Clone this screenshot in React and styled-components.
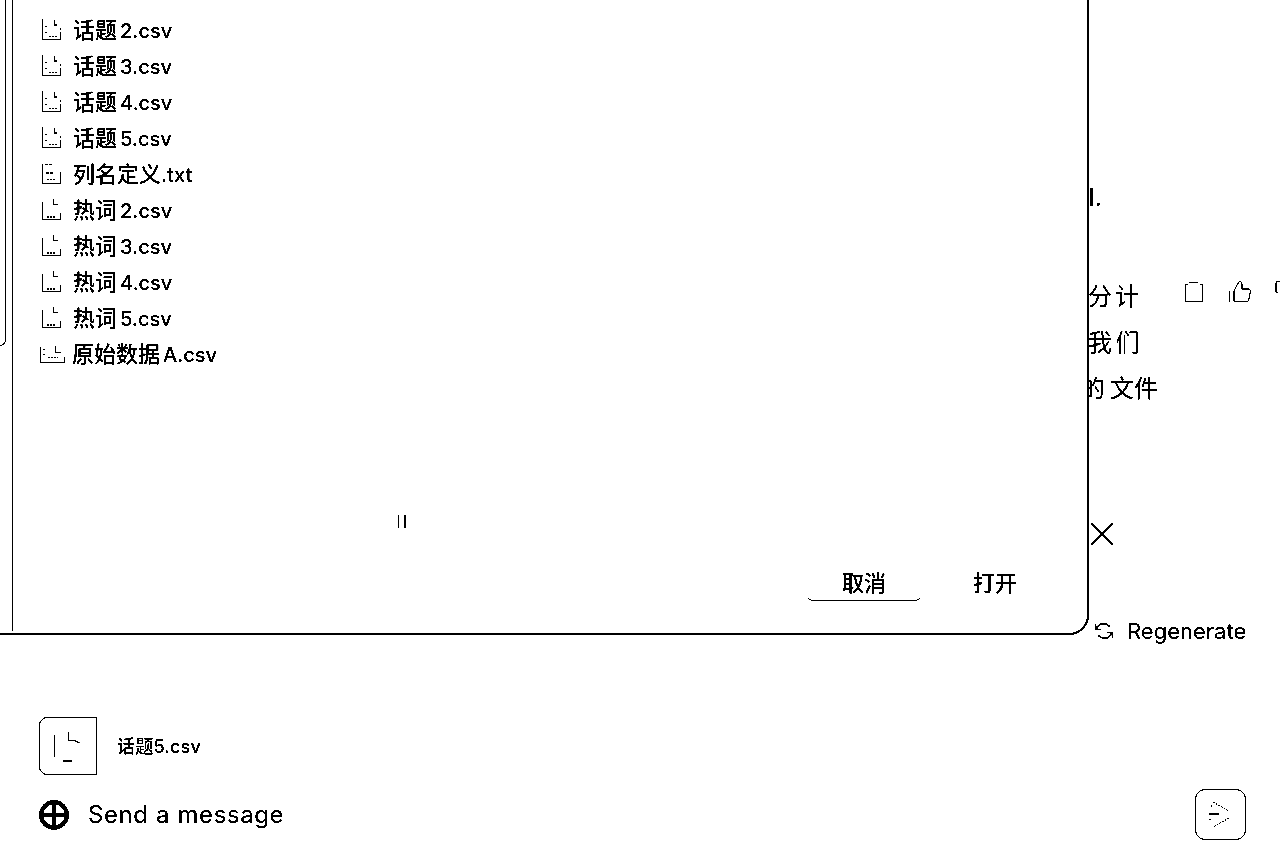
import React from "react";
import styled, { createGlobalStyle } from "styled-components";

const Global = createGlobalStyle`
  html, body { margin: 0; padding: 0; background: #fff; }
  body { font-family: Inter, "Noto Sans CJK SC", sans-serif; color: #000; overflow: hidden; }
`;

const Page = styled.div`
  position: relative;
  width: 1280px;
  height: 844px;
  overflow: hidden;
  background: #fff;
  filter: grayscale(1) brightness(0.85) contrast(3000%);
`;

const Transcript = styled.main`
  height: 690px;
  display: flex;
  flex-direction: column;
  align-items: flex-end;
  padding-top: 173px;
  box-sizing: border-box;
`;

const Para = styled.p`
  margin: 0;
  width: 192px;
  height: 46px;
  font: 24px/46px "Noto Sans CJK SC", sans-serif;
  white-space: nowrap;
`;

const Indented = styled.span`
  display: block;
  margin-left: ${(p) => p.$offset}px;
  letter-spacing: ${(p) => p.$track || 0}px;
`;

const CutGlyph = styled.span`
  margin-right: 5px;
`;

const Gap = styled.div`
  height: ${(p) => p.$h}px;
`;

const Actions = styled.div`
  position: absolute;
  left: 1185px;
  top: 280px;
  display: flex;
  gap: 23px;
`;

const CloseGlyph = styled.svg`
  position: absolute;
  left: 1090px;
  top: 522px;
`;

const Regenerate = styled.div`
  position: absolute;
  left: 1094px;
  top: 618px;
  display: flex;
  align-items: center;
  gap: 13px;
  font: 22px/26px Inter, sans-serif;
`;

const Dialog = styled.section`
  position: absolute;
  left: -30px;
  top: -30px;
  width: 1119px;
  height: 665px;
  box-sizing: border-box;
  background: #fff;
  border-right: 2px solid #000;
  border-bottom: 2px solid #000;
  border-bottom-right-radius: 20px;
  display: flex;
`;

const Rail = styled.div`
  width: 43px;
  flex: none;
  height: 661px;
  border-right: 1px solid #000;
  box-sizing: border-box;
`;

const RailInner = styled.div`
  width: 36px;
  height: 376px;
  box-sizing: border-box;
  border-right: 1px solid #000;
  border-bottom: 1px solid #000;
  border-bottom-right-radius: 6px;
`;

const Pane = styled.div`
  flex: 1;
  display: flex;
  flex-direction: column;
  min-width: 0;
`;

const FileList = styled.ul`
  list-style: none;
  margin: 0;
  padding: 41px 0 0 27px;
  height: 535px;
  box-sizing: border-box;
`;

const FileRow = styled.li`
  height: 36px;
  display: flex;
  align-items: center;
  gap: ${(p) => (p.$wide ? 7 : 11)}px;
  margin-left: ${(p) => (p.$wide ? -1 : 0)}px;
`;

const FileName = styled.span`
  font: 500 22px/36px "Noto Sans CJK SC", sans-serif;
  white-space: nowrap;
  display: flex;
  align-items: baseline;
`;

const Suffix = styled.span`
  font: 500 20px/36px Inter, sans-serif;
  margin-left: ${(p) => (p.$flush ? 0 : 3)}px;
`;

const Handle = styled.div`
  align-self: flex-start;
  margin: 10px 0 0 385px;
  display: flex;
  gap: 5px;
  height: 13px;
`;

const HandleBar = styled.i`
  display: block;
  width: ${(p) => p.$w}px;
  height: 13px;
  background: #000;
`;

const Footer = styled.footer`
  margin-top: 39px;
  height: 46px;
  display: flex;
  justify-content: flex-end;
  padding-right: 35px;
  gap: 17px;
`;

const DialogButton = styled.button`
  width: 114px;
  height: 34px;
  padding: 0;
  display: flex;
  align-items: flex-start;
  justify-content: center;
  font: 500 22px/28px "Noto Sans CJK SC", sans-serif;
  background: transparent;
  color: #000;
  border: 0;
  border-bottom: ${(p) => (p.$primary ? "1px solid #000" : "0")};
  border-radius: 0 0 6px 6px;
`;

const Composer = styled.div`
  position: absolute;
  left: 39px;
  right: 34px;
  top: 717px;
`;

const Attachment = styled.div`
  display: flex;
  align-items: center;
  gap: 20px;
`;

const Thumb = styled.div`
  width: 58px;
  height: 58px;
  box-sizing: border-box;
  border: 1px solid #000;
  border-radius: 8px 0 0 8px;
  display: flex;
  align-items: center;
  justify-content: center;
`;

const AttachName = styled.span`
  font: 500 18px/24px Inter, "Noto Sans CJK SC", sans-serif;
  margin-top: 2px;
  letter-spacing: 0.2px;
`;

const InputRow = styled.div`
  display: flex;
  align-items: center;
  margin-top: 14px;
  height: 51px;
`;

const Prompt = styled.span`
  flex: 1;
  margin-left: 19px;
  font: 24px/30px Inter, sans-serif;
  letter-spacing: 0.6px;
`;

const SendButton = styled.button`
  width: 51px;
  height: 51px;
  padding: 0;
  box-sizing: border-box;
  background: #fff;
  border: 1px solid #000;
  border-radius: 10px;
  display: flex;
  align-items: center;
  justify-content: center;
`;

const DocIcon = ({ kind }) => {
  if (kind === "wide")
    return (
      <svg width="26" height="22" viewBox="0 0 26 22" fill="none" stroke="#000" strokeWidth="1">
        <path d="M1.5 5v15.5h24V15M16.5 4v6.5h5" />
        <path d="M4 7.5h1.5M4 12.5h1.5" strokeWidth="1.2" />
        <path d="M9 15.5h10" strokeWidth="1.5" strokeDasharray="2 1" />
      </svg>
    );
  if (kind === "txt")
    return (
      <svg width="22" height="22" viewBox="0 0 22 22" fill="none" stroke="#000" strokeWidth="1">
        <path d="M2.5 2v19.5h18V10" />
        <path d="M5 2.5h8M6 11h8" strokeWidth="1.3" strokeDasharray="3 1" />
        <path d="M7 17.5h8" strokeWidth="1.5" strokeDasharray="2 1" />
      </svg>
    );
  if (kind === "sparse")
    return (
      <svg width="22" height="22" viewBox="0 0 22 22" fill="none" stroke="#000" strokeWidth="1">
        <path d="M2.5 1v20.5h18V14M20.5 10.5v1" />
        <path d="M14.5 2v5h3M6 8v1M6 14v1" strokeWidth="1.2" />
        <path d="M9 18.5h9" strokeWidth="1.5" strokeDasharray="2 1" />
      </svg>
    );
  return (
    <svg width="22" height="22" viewBox="0 0 22 22" fill="none" stroke="#000" strokeWidth="1">
      <path d="M2.5 4v17.5h18V15" />
      <path d="M13.5 1v5.5h4" strokeWidth="1.2" />
      <path d="M7 19h9" strokeWidth="1.5" strokeDasharray="2 1" />
    </svg>
  );
};

const files = [
  { pre: "话题", rest: "2.csv", kind: "sparse" },
  { pre: "话题", rest: "3.csv", kind: "sparse" },
  { pre: "话题", rest: "4.csv", kind: "sparse" },
  { pre: "话题", rest: "5.csv", kind: "sparse" },
  { pre: "列名定义", rest: ".txt", kind: "txt", flush: true },
  { pre: "热词", rest: "2.csv", kind: "plain" },
  { pre: "热词", rest: "3.csv", kind: "plain" },
  { pre: "热词", rest: "4.csv", kind: "plain" },
  { pre: "热词", rest: "5.csv", kind: "plain" },
  { pre: "原始数据", rest: "A.csv", kind: "wide" },
];

export default function App() {
  return (
    <Page>
      <Global />
      <Transcript>
        <Para><Indented $offset={0}>I.</Indented></Para>
        <Gap $h={53} />
        <Para><Indented $offset={0} $track={3}>分计</Indented></Para>
        <Para><Indented $offset={0} $track={3.5}>我们</Indented></Para>
        <Para><Indented $offset={-7}><CutGlyph>的</CutGlyph>文件</Indented></Para>
      </Transcript>
      <Actions>
        <svg width="20" height="24" viewBox="0 0 20 24" fill="none" stroke="#000" strokeWidth="1">
          <path d="M3 4.5H.5v17h17v-17H15" />
          <path d="M4.5 2.5h8M4.5 21.5h8" strokeWidth="1.4" />
        </svg>
        <svg width="24" height="24" viewBox="0 0 24 24" fill="none" stroke="#000" strokeWidth="1">
          <path d="M1.5 11v11M6 11l5-9.5c2.2 0 3 1.6 3 3.5v4h7c1 0 1.6 1 1.4 2l-1.6 9c-.2 1-1 1.5-2 1.5H6z" />
        </svg>
        <svg width="8" height="14" viewBox="0 0 8 14" fill="none" stroke="#000" strokeWidth="1">
          <path d="M6 1.5H2.5A1.5 1.5 0 0 0 1 3v8.5a1.5 1.5 0 0 0 1.5 1" />
        </svg>
      </Actions>
      <CloseGlyph width="24" height="24" viewBox="0 0 24 24" fill="none" stroke="#000" strokeWidth="2">
        <path d="M1.5 1.5l21 21M22.5 1.5l-21 21" />
      </CloseGlyph>
      <Regenerate>
        <svg width="20" height="20" viewBox="0 0 20 20" fill="none" stroke="#000" strokeWidth="1.6">
          <path d="M1.5 3.5v5h5M18.5 16.5v-5h-5" />
          <path d="M2.5 8a7.5 7.5 0 0 1 13-2.5M17.5 12a7.5 7.5 0 0 1-13 2.5" />
        </svg>
        Regenerate
      </Regenerate>

      <Dialog>
        <Rail><RailInner /></Rail>
        <Pane>
          <FileList>
            {files.map((f) => (
              <FileRow key={f.pre + f.rest} $wide={f.kind === "wide"}>
                <DocIcon kind={f.kind} />
                <FileName>
                  {f.pre}
                  <Suffix $flush={f.flush}>{f.rest}</Suffix>
                </FileName>
              </FileRow>
            ))}
          </FileList>
          <Handle><HandleBar $w={1} /><HandleBar $w={2} /></Handle>
          <Footer>
            <DialogButton $primary>取消</DialogButton>
            <DialogButton>打开</DialogButton>
          </Footer>
        </Pane>
      </Dialog>

      <Composer>
        <Attachment>
          <Thumb>
            <svg width="30" height="36" viewBox="0 0 30 36" fill="none" stroke="#000" strokeWidth="1">
              <path d="M1.5 7v22M15.5 4v8l6 .5 5 2.5" strokeWidth="1.1" />
              <path d="M10 33h9" strokeWidth="1.2" />
            </svg>
          </Thumb>
          <AttachName>话题5.csv</AttachName>
        </Attachment>
        <InputRow>
          <svg width="30" height="30" viewBox="0 0 30 30" fill="none" stroke="#000">
            <circle cx="15" cy="15" r="12.8" strokeWidth="4.2" />
            <path d="M15 3v24M3 15h24" strokeWidth="3.4" />
          </svg>
          <Prompt>Send a message</Prompt>
          <SendButton aria-label="send">
            <svg width="28" height="28" viewBox="0 0 28 28" fill="none" stroke="#000" strokeWidth="1">
              <path d="M6 1l16 9M22 17L6 26" strokeDasharray="2 1" />
              <path d="M2 13h5" strokeWidth="2.4" />
              <path d="M7 13h5" strokeWidth="1.2" />
              <path d="M4.5 4.5v1.5M3 17.5v1.5" strokeWidth="1.2" />
            </svg>
          </SendButton>
        </InputRow>
      </Composer>
    </Page>
  );
}
